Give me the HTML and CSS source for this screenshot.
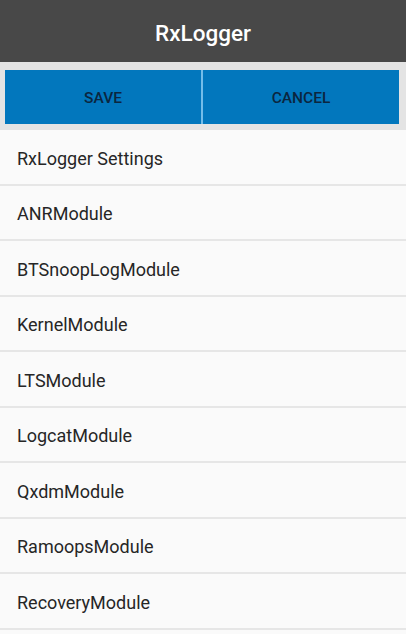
FILE: index.html
```html
<!DOCTYPE html>
<html>

<head>
    <title>RxLogger</title>
    <link rel="stylesheet" href="styles.css">
</head>

<body>
    <div class="header">RxLogger</div>
    <div class="actions">
        <button class="btn">SAVE</button>
        <button class="btn">CANCEL</button>
    </div>
    <ul class="list">
        <li>RxLogger Settings</li>
        <li>ANRModule</li>
        <li>BTSnoopLogModule</li>
        <li>KernelModule</li>
        <li>LTSModule</li>
        <li>LogcatModule</li>
        <li>QxdmModule</li>
        <li>RamoopsModule</li>
        <li>RecoveryModule</li>
    </ul>
</body>

</html>
```

FILE: styles.css
```css
html, body {
    margin: 0;
    padding: 0;
    background: #fafafa;
    font-family: Roboto, "Liberation Sans", sans-serif;
    overflow: hidden;
}

.header {
    height: 62px;
    box-sizing: border-box;
    padding-top: 3px;
    background: #484848;
    color: #fff;
    font-size: 22.5px;
    font-weight: 500;
    display: flex;
    align-items: center;
    justify-content: center;
}

.actions {
    display: flex;
    background: #e4e4e4;
    padding: 8px 7px 6px 5px;
}

.btn {
    flex: 1;
    height: 54px;
    border: none;
    margin: 0;
    padding: 1px 0 0;
    background: #0277bd;
    color: #0b2640;
    font-family: Roboto, "Liberation Sans", sans-serif;
    font-size: 15.5px;
    font-weight: 500;
}

.btn + .btn {
    border-left: 2px solid #74bde9;
}

.list {
    list-style: none;
    margin: 0;
    padding: 0;
}

.list li {
    height: 50.5px;
    padding-top: 3px;
    border-bottom: 2px solid #e6e6e6;
    display: flex;
    align-items: center;
    padding-left: 17px;
    font-size: 18px;
    color: #262626;
}
```
